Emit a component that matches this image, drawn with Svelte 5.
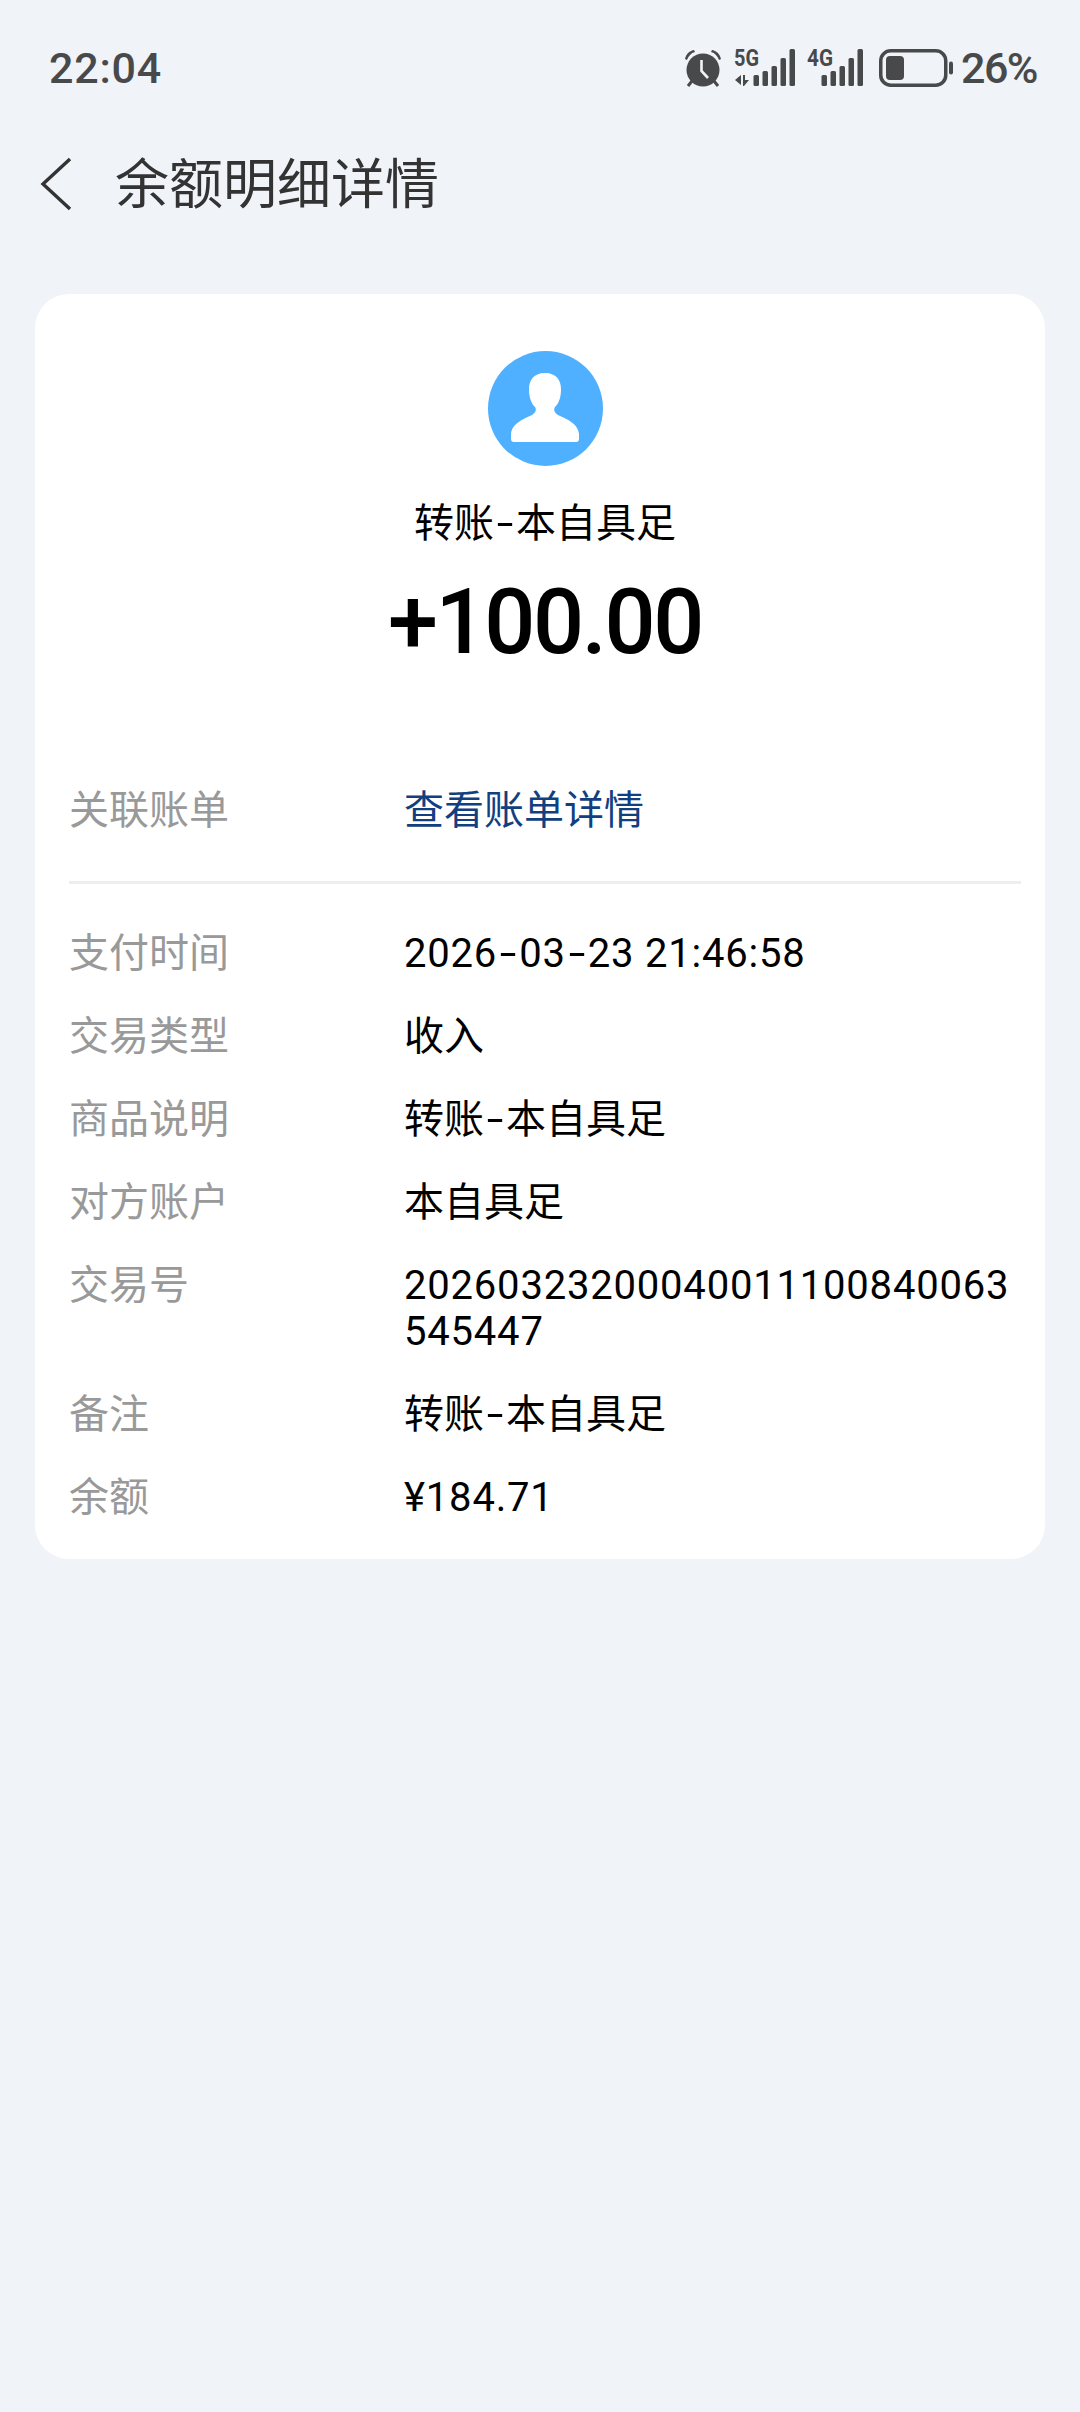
<script>
  const rows = [
    { label: "支付时间", value: "2026-03-23 21:46:58", num: true },
    { label: "交易类型", value: "收入" },
    { label: "商品说明", value: "转账-本自具足" },
    { label: "对方账户", value: "本自具足" },
    { label: "交易号", value: "20260323200040011100840063545447", num: true },
    { label: "备注", value: "转账-本自具足" },
    { label: "余额", value: "¥184.71", num: true },
  ];
  const signalBars = [
    { x: 0, top: 26 },
    { x: 9, top: 22 },
    { x: 18, top: 17 },
    { x: 27, top: 9 },
    { x: 36, top: 0 },
  ];
</script>

{#snippet hyphenated(text)}
  {#each text.split("-") as part, i}{#if i > 0}<span class="hy">-</span>{/if}{part}{/each}
{/snippet}

<div class="page">
  <header class="status">
    <span class="time">22:04</span>
    <div class="status-icons">
      <svg class="alarm" width="38" height="38" viewBox="0 0 38 38">
        <circle cx="19" cy="21" r="16.5" fill="#48494b" />
        <path d="M1 10 C2 5 6 1.5 10 1 L11 3 C7 4 4.5 7 3 11 Z" fill="#48494b" />
        <path d="M37 10 C36 5 32 1.5 28 1 L27 3 C31 4 33.5 7 35 11 Z" fill="#48494b" />
        <path d="M8 32 L4 37 M30 32 L34 37" stroke="#48494b" stroke-width="3" />
        <path d="M17.5 11 V22 L24 29" fill="none" stroke="#f0f3f8" stroke-width="2.6" />
      </svg>
      <svg class="net" width="61" height="50" viewBox="0 -6 61 50">
        <text x="0" y="17" textLength="25" lengthAdjust="spacingAndGlyphs">5G</text>
        <path d="M1 31 L7 26 V36 Z M9 26 H11 V31 H15 L10 37 H9 Z" fill="#48494b" />
        <g transform="translate(19.5 0)">
          {#each signalBars as bar}
            <rect x={bar.x} y={bar.top} width="5.5" height={37 - bar.top} rx="1.5" fill="#48494b" />
          {/each}
        </g>
      </svg>
      <svg class="net" width="56" height="50" viewBox="0 -6 56 50">
        <text x="0" y="17" textLength="26" lengthAdjust="spacingAndGlyphs">4G</text>
        <g transform="translate(14.5 0)">
          {#each signalBars as bar}
            <rect x={bar.x} y={bar.top} width="5.5" height={37 - bar.top} rx="1.5" fill="#48494b" />
          {/each}
        </g>
      </svg>
      <svg class="battery" width="74" height="38" viewBox="0 0 74 38">
        <rect x="1.75" y="1.75" width="65" height="34.5" rx="10" fill="none" stroke="#48494b" stroke-width="3.5" />
        <rect x="7" y="7" width="18" height="24" rx="4" fill="#48494b" />
        <rect x="70" y="12.5" width="4" height="13" rx="2" fill="#48494b" />
      </svg>
      <span class="percent">26%</span>
    </div>
  </header>

  <nav class="nav">
    <svg width="34" height="54" viewBox="0 0 34 54">
      <path d="M31 2 L4 27 L31 52" fill="none" stroke="#333" stroke-width="3.4" />
    </svg>
    <h1>余额明细详情</h1>
  </nav>

  <main class="card">
    <div class="avatar">
      <svg width="115" height="115" viewBox="0 0 115 115">
        <circle cx="57.5" cy="57.5" r="57.5" fill="#4fb0ff" />
        <path
          d="M57 22 C45 22 41 30 41 38 C41 46 43 52 47 56 C49 59 47 62 44 64 C36 68 24 72 23 83 V88 C23 90 24 91 26 91 H88 C90 91 91 90 91 88 V83 C90 72 78 68 70 64 C67 62 65 59 67 56 C71 52 73 46 73 38 C73 30 69 22 57 22 Z"
          fill="#fff"
        />
      </svg>
    </div>
    <div class="name">{@render hyphenated("转账-本自具足")}</div>
    <div class="amount">+100.00</div>

    <div class="row link-row">
      <span class="label">关联账单</span>
      <span class="value link">查看账单详情</span>
    </div>
    <div class="divider"></div>

    <div class="rows">
      {#each rows as row}
        <div class="row">
          <span class="label">{row.label}</span>
          <span class="value" class:num={row.num}>{@render hyphenated(row.value)}</span>
        </div>
      {/each}
    </div>
  </main>
</div>

<style>
  :global(body) {
    margin: 0;
    background: #f0f3f8;
  }

  .page {
    min-height: 2412px;
    background: #f0f3f8;
    font-family: Roboto, "Noto Sans CJK SC", sans-serif;
  }

  .status {
    height: 136px;
    display: flex;
    align-items: center;
    justify-content: space-between;
    padding: 0 43px 0 49px;
    color: #48494b;
  }

  .time {
    font-size: 43px;
    font-weight: 500;
    letter-spacing: 0.8px;
  }

  .status-icons {
    display: flex;
    align-items: center;
  }

  .net {
    margin-left: 12px;
  }

  .net text {
    font-family: Roboto, sans-serif;
    font-size: 24px;
    font-weight: 700;
    fill: #48494b;
  }

  .battery {
    margin-left: 16px;
  }

  .percent {
    margin-left: 8px;
    font-size: 43px;
    font-weight: 500;
    letter-spacing: -1.5px;
  }

  .nav {
    height: 96px;
    display: flex;
    align-items: center;
    padding-left: 39px;
    margin-bottom: 62px;
  }

  .nav h1 {
    margin: 3px 0 0 42px;
    font-size: 54px;
    font-weight: 400;
    color: #333;
    line-height: 1;
  }

  .card {
    margin: 0 35px;
    padding: 57px 24px 38px 34px;
    background: #fff;
    border-radius: 34px;
  }

  .avatar {
    display: flex;
    justify-content: center;
    height: 115px;
  }

  .name {
    margin-top: 30px;
    text-align: center;
    font-size: 40px;
    line-height: 56px;
    color: #000;
  }

  .amount {
    margin-top: 21px;
    text-align: center;
    font-size: 90px;
    font-weight: 500;
    line-height: 100px;
    letter-spacing: -2.4px;
    color: #000;
  }

  .row {
    display: grid;
    grid-template-columns: 335px 1fr;
    font-size: 40px;
    line-height: 46px;
  }

  .link-row {
    margin-top: 115px;
  }

  .divider {
    height: 3px;
    margin: 47px 0 47px;
    background: #eeeeee;
  }

  .rows {
    display: flex;
    flex-direction: column;
    gap: 37px;
  }

  .label {
    color: #999;
  }

  .value {
    color: #000;
    word-break: break-all;
  }

  .num {
    letter-spacing: 0.8px;
  }

  /* the hyphen in the original font is about twice as wide as Roboto's */
  .hy {
    display: inline-block;
    width: 22px;
    text-align: center;
    letter-spacing: 0;
    transform: scaleX(1.5);
  }

  .link {
    color: #123f80;
  }
</style>
